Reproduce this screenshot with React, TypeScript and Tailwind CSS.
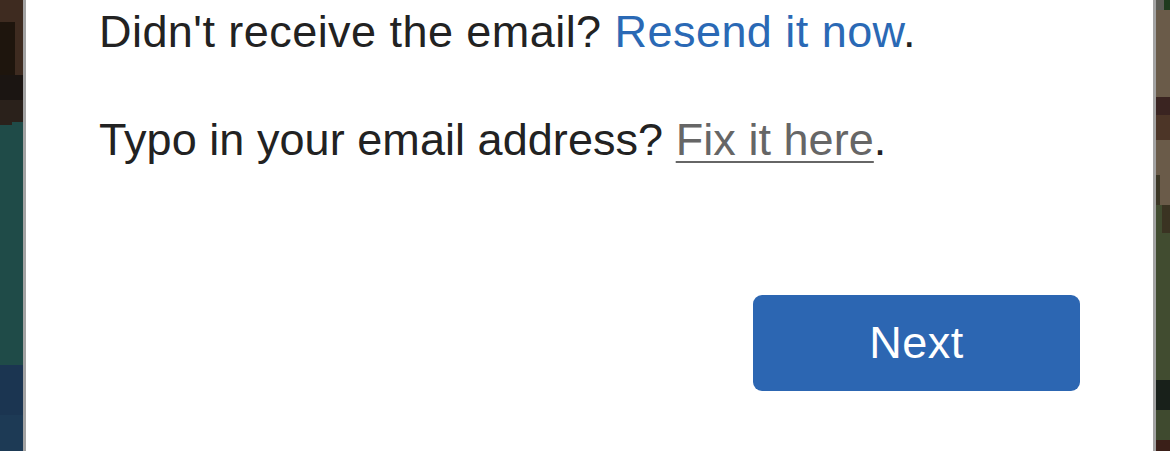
const LeftStrip = () => (
  <div className="flex w-[23px] shrink-0 flex-col">
    <div className="h-[22px] bg-[#3e2b20]" />
    <div className="flex h-[53px]">
      <div className="w-[15px] bg-[#1e150d]" />
      <div className="flex-1 bg-[#3e2b20]" />
    </div>
    <div className="h-[25px] bg-[#1b1512]" />
    <div className="flex h-[25px]">
      <div className="w-[12px] bg-[#2a211b]" />
      <div className="flex flex-1 flex-col">
        <div className="h-[22px] bg-[#2a211b]" />
        <div className="flex-1 bg-[#1f4b48]" />
      </div>
    </div>
    <div className="h-[240px] bg-[#1f4b48]" />
    <div className="h-[50px] bg-[#1b3551]" />
    <div className="flex-1 bg-[#1d3a55]" />
  </div>
);

const RightStrip = () => (
  <div className="flex w-[14px] shrink-0 flex-col">
    <div className="flex h-[10px]">
      <div className="w-[8px] bg-[#5c5c56]" />
      <div className="flex-1 bg-[#1e3a1e]" />
    </div>
    <div className="h-[87px] bg-[#6a5b49]" />
    <div className="h-[18px] bg-[#3a2421]" />
    <div className="h-[25px] bg-[#4c3527]" />
    <div className="flex h-[65px]">
      <div className="flex w-[4px] flex-col">
        <div className="h-[35px] bg-[#6a5b49]" />
        <div className="flex-1 bg-[#3a3524]" />
      </div>
      <div className="flex-1 bg-[#6a5b49]" />
    </div>
    <div className="flex h-[28px]">
      <div className="w-[6px] bg-[#414c30]" />
      <div className="flex-1 bg-[#3a3322]" />
    </div>
    <div className="h-[147px] bg-[#414c30]" />
    <div className="h-[30px] bg-[#18201a]" />
    <div className="h-[30px] bg-[#3f4a2f]" />
    <div className="flex-1 bg-[#3a1f18]" />
  </div>
);

const VerifyEmail = () => {
  return (
    <div className="flex flex-1 flex-col border-x-[3px] border-x-[#a3a3a3] bg-white pl-[73px] pr-[73px] pt-[6px]">
      <p className="text-[45px] leading-[52px] tracking-[0.45px] text-[#222222]">
        Didn't receive the email?{" "}
        <a href="#" className="text-[#2a69b5]">
          Resend it now
        </a>
        .
      </p>
      <p className="mt-[56px] text-[45px] leading-[52px] tracking-[0.05px] text-[#222222]">
        Typo in your email address?{" "}
        <a href="#" className="text-[#666666] underline decoration-2 underline-offset-[6px]">
          Fix it here
        </a>
        .
      </p>
      <div className="mt-[129px] flex justify-end">
        <button className="flex h-[96px] w-[327px] items-center justify-center rounded-[9px] bg-[#2c66b2] text-[45px] leading-[52px] tracking-[0.45px] text-white">
          Next
        </button>
      </div>
    </div>
  );
};

export default function App() {
  return (
    <div className="flex h-[451px] w-[1170px] overflow-hidden font-['Liberation_Sans',Arial,sans-serif]">
      <LeftStrip />
      <VerifyEmail />
      <RightStrip />
    </div>
  );
}
